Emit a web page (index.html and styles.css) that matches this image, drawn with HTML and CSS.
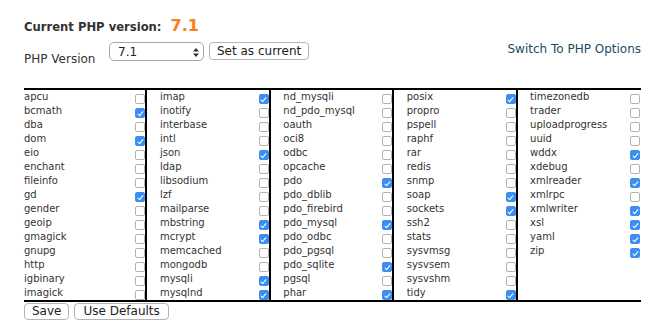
FILE: index.html
```html
<!DOCTYPE html>
<html>
<head>
<meta charset="utf-8">
<link rel="stylesheet" href="styles.css">
</head>
<body>
<div class="page">
  <h2 class="title">Current PHP version: <span class="ver">7.1</span></h2>
  <div class="toolbar">
    <div class="left">
      <span class="label">PHP Version</span>
      <div class="select"><span>7.1</span>
        <svg class="arrows" width="6" height="9" viewBox="0 0 6 9"><path d="M3 0 L6 3.5 L0 3.5 Z M0 5.5 L6 5.5 L3 9 Z" fill="#333"/></svg>
      </div>
      <button class="btn">Set as current</button>
    </div>
    <a class="switch">Switch To PHP Options</a>
  </div>
  <div class="grid">
    <div class="col">
      <label class="row"><span>apcu</span><input type="checkbox"></label>
      <label class="row"><span>bcmath</span><input type="checkbox" checked></label>
      <label class="row"><span>dba</span><input type="checkbox"></label>
      <label class="row"><span>dom</span><input type="checkbox" checked></label>
      <label class="row"><span>eio</span><input type="checkbox"></label>
      <label class="row"><span>enchant</span><input type="checkbox"></label>
      <label class="row"><span>fileinfo</span><input type="checkbox"></label>
      <label class="row"><span>gd</span><input type="checkbox" checked></label>
      <label class="row"><span>gender</span><input type="checkbox"></label>
      <label class="row"><span>geoip</span><input type="checkbox"></label>
      <label class="row"><span>gmagick</span><input type="checkbox"></label>
      <label class="row"><span>gnupg</span><input type="checkbox"></label>
      <label class="row"><span>http</span><input type="checkbox"></label>
      <label class="row"><span>igbinary</span><input type="checkbox"></label>
      <label class="row"><span>imagick</span><input type="checkbox"></label>
    </div>
    <div class="col">
      <label class="row"><span>imap</span><input type="checkbox" checked></label>
      <label class="row"><span>inotify</span><input type="checkbox"></label>
      <label class="row"><span>interbase</span><input type="checkbox"></label>
      <label class="row"><span>intl</span><input type="checkbox"></label>
      <label class="row"><span>json</span><input type="checkbox" checked></label>
      <label class="row"><span>ldap</span><input type="checkbox"></label>
      <label class="row"><span>libsodium</span><input type="checkbox"></label>
      <label class="row"><span>lzf</span><input type="checkbox"></label>
      <label class="row"><span>mailparse</span><input type="checkbox"></label>
      <label class="row"><span>mbstring</span><input type="checkbox" checked></label>
      <label class="row"><span>mcrypt</span><input type="checkbox" checked></label>
      <label class="row"><span>memcached</span><input type="checkbox"></label>
      <label class="row"><span>mongodb</span><input type="checkbox"></label>
      <label class="row"><span>mysqli</span><input type="checkbox" checked></label>
      <label class="row"><span>mysqlnd</span><input type="checkbox" checked></label>
    </div>
    <div class="col">
      <label class="row"><span>nd_mysqli</span><input type="checkbox"></label>
      <label class="row"><span>nd_pdo_mysql</span><input type="checkbox"></label>
      <label class="row"><span>oauth</span><input type="checkbox"></label>
      <label class="row"><span>oci8</span><input type="checkbox"></label>
      <label class="row"><span>odbc</span><input type="checkbox"></label>
      <label class="row"><span>opcache</span><input type="checkbox"></label>
      <label class="row"><span>pdo</span><input type="checkbox" checked></label>
      <label class="row"><span>pdo_dblib</span><input type="checkbox"></label>
      <label class="row"><span>pdo_firebird</span><input type="checkbox"></label>
      <label class="row"><span>pdo_mysql</span><input type="checkbox" checked></label>
      <label class="row"><span>pdo_odbc</span><input type="checkbox"></label>
      <label class="row"><span>pdo_pgsql</span><input type="checkbox"></label>
      <label class="row"><span>pdo_sqlite</span><input type="checkbox" checked></label>
      <label class="row"><span>pgsql</span><input type="checkbox"></label>
      <label class="row"><span>phar</span><input type="checkbox" checked></label>
    </div>
    <div class="col">
      <label class="row"><span>posix</span><input type="checkbox" checked></label>
      <label class="row"><span>propro</span><input type="checkbox"></label>
      <label class="row"><span>pspell</span><input type="checkbox"></label>
      <label class="row"><span>raphf</span><input type="checkbox"></label>
      <label class="row"><span>rar</span><input type="checkbox"></label>
      <label class="row"><span>redis</span><input type="checkbox"></label>
      <label class="row"><span>snmp</span><input type="checkbox"></label>
      <label class="row"><span>soap</span><input type="checkbox" checked></label>
      <label class="row"><span>sockets</span><input type="checkbox" checked></label>
      <label class="row"><span>ssh2</span><input type="checkbox"></label>
      <label class="row"><span>stats</span><input type="checkbox"></label>
      <label class="row"><span>sysvmsg</span><input type="checkbox"></label>
      <label class="row"><span>sysvsem</span><input type="checkbox"></label>
      <label class="row"><span>sysvshm</span><input type="checkbox"></label>
      <label class="row"><span>tidy</span><input type="checkbox" checked></label>
    </div>
    <div class="col">
      <label class="row"><span>timezonedb</span><input type="checkbox"></label>
      <label class="row"><span>trader</span><input type="checkbox"></label>
      <label class="row"><span>uploadprogress</span><input type="checkbox"></label>
      <label class="row"><span>uuid</span><input type="checkbox"></label>
      <label class="row"><span>wddx</span><input type="checkbox" checked></label>
      <label class="row"><span>xdebug</span><input type="checkbox"></label>
      <label class="row"><span>xmlreader</span><input type="checkbox" checked></label>
      <label class="row"><span>xmlrpc</span><input type="checkbox"></label>
      <label class="row"><span>xmlwriter</span><input type="checkbox" checked></label>
      <label class="row"><span>xsl</span><input type="checkbox" checked></label>
      <label class="row"><span>yaml</span><input type="checkbox" checked></label>
      <label class="row"><span>zip</span><input type="checkbox" checked></label>
    </div>
  </div>
  <div class="actions">
    <button class="btn small">Save</button>
    <button class="btn small">Use Defaults</button>
  </div>
</div>
</body>
</html>
```
FILE: styles.css
```css
html, body {
  margin: 0;
  padding: 0;
  background: #fff;
}
body {
  font-family: "DejaVu Sans", Verdana, sans-serif;
  color: #333;
}
.page {
  width: 617px;
  margin-left: 24px;
  padding-top: 16px;
}
.title {
  margin: 0;
  font-size: 11.6px;
  font-weight: bold;
  line-height: 20px;
  height: 20px;
  color: #333;
}
.ver {
  font-size: 16px;
  color: #f5801e;
  margin-left: 5px;
}
.toolbar {
  margin-top: 6px;
  height: 24px;
  display: flex;
  justify-content: space-between;
  align-items: flex-start;
}
.left {
  display: flex;
  align-items: flex-start;
}
.label {
  font-size: 12px;
  line-height: 14px;
  margin-top: 10px;
  width: 72px;
  margin-right: 13px;
}
.select {
  box-sizing: border-box;
  width: 95px;
  height: 19px;
  border: 1px solid #a6a6a6;
  border-radius: 5px;
  display: flex;
  align-items: center;
  justify-content: space-between;
  padding: 0 4px 0 8px;
  font-size: 12px;
  color: #222;
}
.arrows {
  display: block;
  margin-top: 2px;
}
.btn {
  box-sizing: border-box;
  height: 18px;
  margin: 0 0 0 5px;
  padding: 0 7px;
  background: #fff;
  border: 1px solid #b4b4b4;
  border-radius: 4px;
  font-family: "DejaVu Sans", Verdana, sans-serif;
  font-size: 12px;
  color: #222;
  line-height: 16px;
}
.switch {
  font-size: 12px;
  line-height: 14px;
  color: #1d4a60;
  margin-top: 0;
}
.grid {
  margin-top: 22px;
  display: grid;
  grid-template-columns: repeat(5, 1fr);
  border-top: 2px solid #000;
  border-bottom: 2px solid #000;
}
.col {
  display: flex;
  flex-direction: column;
  padding-left: 12.5px;
}
.col:first-child {
  padding-left: 0;
}
.col:not(:last-child) {
  border-right: 2px solid #000;
}
.col:last-child {
  padding-right: 1px;
}
.row {
  height: 14px;
  display: flex;
  justify-content: space-between;
  font-size: 10px;
  line-height: 14px;
}
.row input {
  appearance: none;
  -webkit-appearance: none;
  box-sizing: border-box;
  width: 10px;
  height: 10px;
  margin: 4px 0 0 0;
  border: 1px solid #b3b3b3;
  border-radius: 2px;
  background: #fff;
  position: relative;
}
.row input:checked {
  background: #3d8ef4;
  border-color: #3d8ef4;
}
.row input:checked::after {
  content: "";
  position: absolute;
  left: 2.5px;
  top: 0.5px;
  width: 2px;
  height: 5px;
  border-right: 1.5px solid #fff;
  border-bottom: 1.5px solid #fff;
  transform: rotate(40deg);
}
.actions {
  margin-top: 1px;
  display: flex;
}
.btn.small {
  height: 17px;
  line-height: 15px;
  padding: 0 8px;
}
.btn.small:first-child {
  margin-left: 0;
  padding: 0 7px;
}
```
